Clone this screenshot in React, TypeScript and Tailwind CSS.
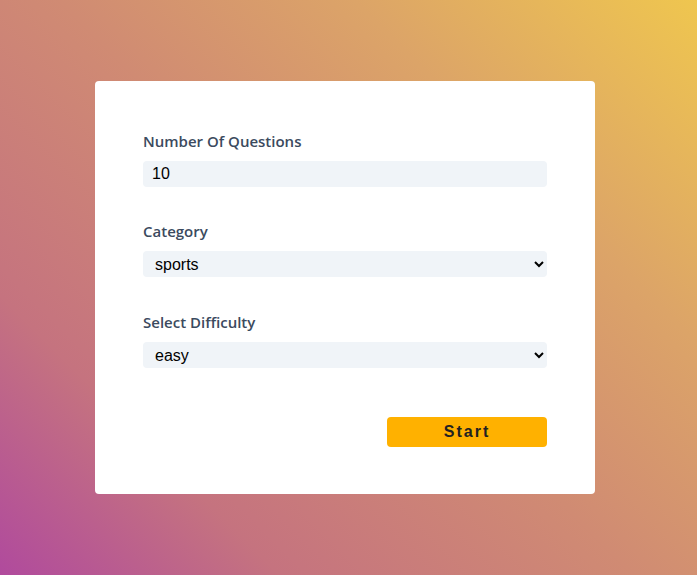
import React from "react";

const App: React.FC = () => {
  return (
    <div className="min-h-screen w-full flex items-center justify-center pr-[7px] bg-[linear-gradient(45deg,#b04a9d_0%,#c5737f_22%,#d08b73_50%,#dca468_73%,#efc64f_100%)]">
      <div className="w-[500px] h-[413px] bg-white rounded-[4px] px-12 pt-[49px] font-['Open_Sans',sans-serif]">
        <div className="mb-[33px]">
          <label className="block text-[15px] leading-[22px] font-semibold text-[#3b4a5e] mb-[9px]">
            Number Of Questions
          </label>
          <input
            type="number"
            defaultValue={10}
            className="block w-full h-[26px] bg-[#f0f4f8] rounded-[4px] pl-[9px] text-[16px] text-black font-['Liberation_Sans',sans-serif] outline-none"
          />
        </div>
        <div className="mb-[34px]">
          <label className="block text-[15px] leading-[22px] font-semibold text-[#3b4a5e] mb-[9px]">
            Category
          </label>
          <select
            defaultValue="sports"
            className="block w-full h-[26px] bg-[#f0f4f8] rounded-[4px] pl-[8px] pr-[2px] text-[16px] text-black font-['Liberation_Sans',sans-serif] outline-none"
          >
            <option value="sports">sports</option>
            <option value="history">history</option>
            <option value="politics">politics</option>
          </select>
        </div>
        <div className="mb-[49px]">
          <label className="block text-[15px] leading-[22px] font-semibold text-[#3b4a5e] mb-[9px]">
            Select Difficulty
          </label>
          <select
            defaultValue="easy"
            className="block w-full h-[26px] bg-[#f0f4f8] rounded-[4px] pl-[8px] pr-[2px] text-[16px] text-black font-['Liberation_Sans',sans-serif] outline-none"
          >
            <option value="easy">easy</option>
            <option value="medium">medium</option>
            <option value="hard">hard</option>
          </select>
        </div>
        <div className="flex justify-end">
          <button className="w-[160px] h-[30px] bg-[#ffb100] rounded-[4px] text-[16px] font-bold tracking-[2px] text-[#222] font-['Liberation_Sans',sans-serif]">
            Start
          </button>
        </div>
      </div>
    </div>
  );
};

export default App;
